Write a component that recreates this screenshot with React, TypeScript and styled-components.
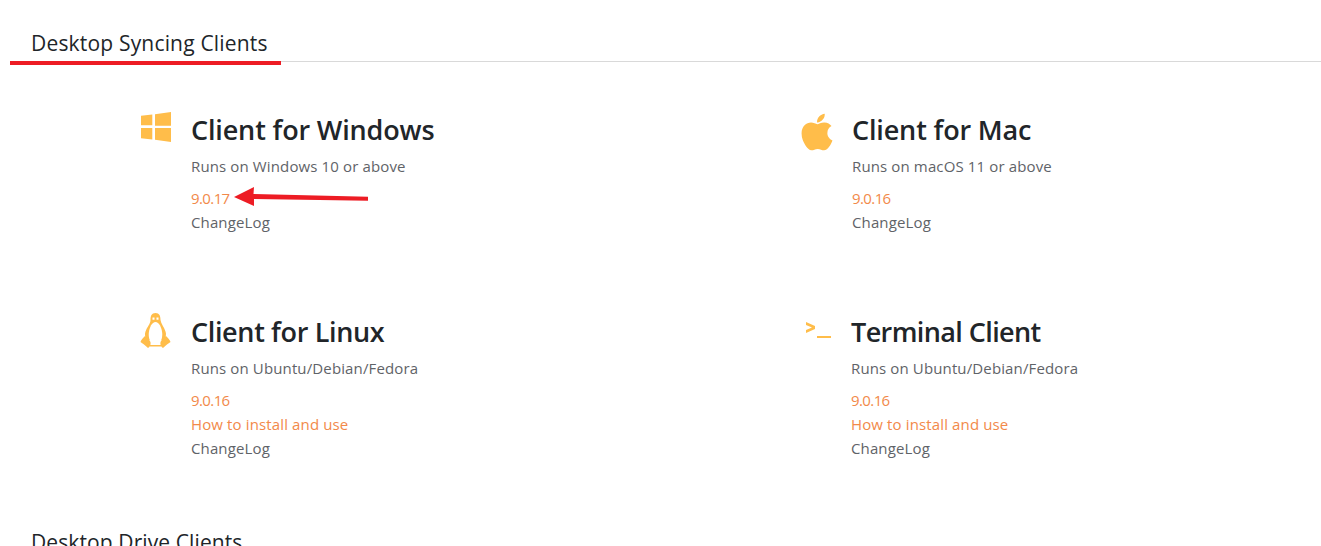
import { FaApple } from 'react-icons/fa';
import styled, { createGlobalStyle } from 'styled-components';

const GlobalStyle = createGlobalStyle`
  html, body {
    margin: 0;
    padding: 0;
    background: #fff;
    overflow: hidden;
    font-family: "Open Sans", "Noto Sans", sans-serif;
  }
`;

const Page = styled.div`
  height: 546px;
  overflow: hidden;
  padding-top: 28px;
  padding-left: 10px;
  box-sizing: border-box;
`;

const TabBar = styled.div`
  height: 33px;
  border-bottom: 1px solid #d9d9d9;
`;

const SectionTitle = styled.div`
  display: inline-block;
  box-sizing: border-box;
  width: 271px;
  height: 37px;
  padding-left: 21px;
  font-size: 21px;
  line-height: 30px;
  color: #212529;
  letter-spacing: 0.18px;
  border-bottom: 4px solid #ed1c24;
`;

const PlainTitle = styled.div`
  padding-left: 21px;
  font-size: 21px;
  line-height: 30px;
  color: #212529;
  letter-spacing: 0.1px;
`;

const ClientGrid = styled.div`
  display: grid;
  grid-template-columns: 660px 470px;
  grid-auto-rows: 202px;
  padding: 49px 0 12px 130px;
`;

const Client = styled.div`
  position: relative;
  display: flex;
`;

const IconSlot = styled.div<{ $width: number; $left: number; $top: number }>`
  width: ${(p) => p.$width}px;
  flex: none;
  box-sizing: border-box;
  color: #ffbd4a;
  margin-left: ${(p) => p.$left}px;
  padding-top: ${(p) => p.$top}px;

  svg {
    display: block;
  }
`;

const Body = styled.div`
  display: flex;
  flex-direction: column;
`;

const ClientName = styled.h3<{ $spacing?: number }>`
  margin: 1px 0 0;
  font-size: 27px;
  line-height: 36px;
  font-weight: 600;
  color: #212529;
  letter-spacing: ${(p) => p.$spacing ?? -0.15}px;
`;

const Requirement = styled.div`
  margin-top: 6px;
  margin-bottom: 8px;
  font-size: 15px;
  line-height: 24px;
  color: #5f6368;
  letter-spacing: 0.13px;
`;

const TextLink = styled.a<{ $accent?: boolean; $version?: boolean }>`
  font-size: 15px;
  line-height: 24px;
  color: ${(p) => (p.$accent ? '#f2894a' : '#5f6368')};
  letter-spacing: ${(p) => (p.$version ? '-0.6px' : '0.13px')};
`;

const Arrow = styled.svg`
  position: absolute;
  left: 94px;
  top: 74px;
`;

function WindowsIcon() {
  return (
    <svg width="30" height="30" viewBox="0 0 30 30" fill="currentColor">
      <path d="M0 3.8 L11.3 2.6 V13.3 H0 Z" />
      <path d="M14 2.3 L30 0 V13.7 H14 Z" />
      <path d="M0 16 H11.3 V27.4 L0 26.2 Z" />
      <path d="M14 16 H30 V30 L14 27.7 Z" />
    </svg>
  );
}

function LinuxIcon() {
  return (
    <svg width="31" height="35" viewBox="0 0 31 35">
      <path
        fill="currentColor"
        d="M15.5 0C11.5 0 10.5 3 10.5 7C10.5 11 7 14 5.5 18.5C4.5 21 5 24 6.5 27L24 27C26 24 26.5 21 25.5 18.5C24 14 21 11 20.5 7C20.5 3 19.5 0 15.5 0Z"
      />
      <path
        fill="#fff"
        d="M15.5 9C12 9 9.5 14 8.8 20C8.4 25 10 31 15.5 32C21 31 22.6 25 22.2 20C21.5 14 19 9 15.5 9Z"
      />
      <path fill="#fff" d="M12.5 4.5h2v2.2h-2zM16.5 4.5h2v2.2h-2z" />
      <path
        fill="currentColor"
        d="M5 23C3 25 1 27 .5 29C2 30 5 32 8 35C10 34 11 32 10.5 29C9 26 7 24 5 23Z"
      />
      <path
        fill="currentColor"
        d="M26 23C28 25 30 27 30.5 29C29 30 26 32 23 35C21 34 20 32 20.5 29C22 26 24 24 26 23Z"
      />
      <path fill="currentColor" d="M10 32h11v1.5H10z" />
    </svg>
  );
}

function TerminalIcon() {
  return (
    <svg width="25" height="16" viewBox="0 0 25 16" fill="currentColor">
      <path d="M0 0 L9 4 V7 L0 11 V8 L6 5.5 L0 3 Z" />
      <rect x="11" y="14" width="14" height="2" />
    </svg>
  );
}

function App() {
  return (
    <>
      <GlobalStyle />
      <Page>
        <TabBar>
          <SectionTitle>Desktop Syncing Clients</SectionTitle>
        </TabBar>
        <ClientGrid>
          <Client>
            <IconSlot $width={50} $left={1} $top={1}>
              <WindowsIcon />
            </IconSlot>
            <Body>
              <ClientName>Client for Windows</ClientName>
              <Requirement>Runs on Windows 10 or above</Requirement>
              <TextLink $accent $version>
                9.0.17
              </TextLink>
              <TextLink>ChangeLog</TextLink>
            </Body>
            <Arrow width="136" height="24" viewBox="0 0 136 24">
              <path d="M0 12 L20 2 L19.5 9 L134 11.7 L134 15.7 L20 14 L20 21 Z" fill="#ed1c24" />
            </Arrow>
          </Client>
          <Client>
            <IconSlot $width={56} $left={-4} $top={0}>
              <FaApple size={42} />
            </IconSlot>
            <Body>
              <ClientName>Client for Mac</ClientName>
              <Requirement>Runs on macOS 11 or above</Requirement>
              <TextLink $accent $version>
                9.0.16
              </TextLink>
              <TextLink>ChangeLog</TextLink>
            </Body>
          </Client>
          <Client>
            <IconSlot $width={51} $left={0} $top={0}>
              <LinuxIcon />
            </IconSlot>
            <Body>
              <ClientName $spacing={-0.35}>Client for Linux</ClientName>
              <Requirement>Runs on Ubuntu/Debian/Fedora</Requirement>
              <TextLink $accent $version>
                9.0.16
              </TextLink>
              <TextLink $accent>How to install and use</TextLink>
              <TextLink>ChangeLog</TextLink>
            </Body>
          </Client>
          <Client>
            <IconSlot $width={45} $left={6} $top={9}>
              <TerminalIcon />
            </IconSlot>
            <Body>
              <ClientName $spacing={-0.6}>Terminal Client</ClientName>
              <Requirement>Runs on Ubuntu/Debian/Fedora</Requirement>
              <TextLink $accent $version>
                9.0.16
              </TextLink>
              <TextLink $accent>How to install and use</TextLink>
              <TextLink>ChangeLog</TextLink>
            </Body>
          </Client>
        </ClientGrid>
        <PlainTitle>Desktop Drive Clients</PlainTitle>
      </Page>
    </>
  );
}

export default App;
